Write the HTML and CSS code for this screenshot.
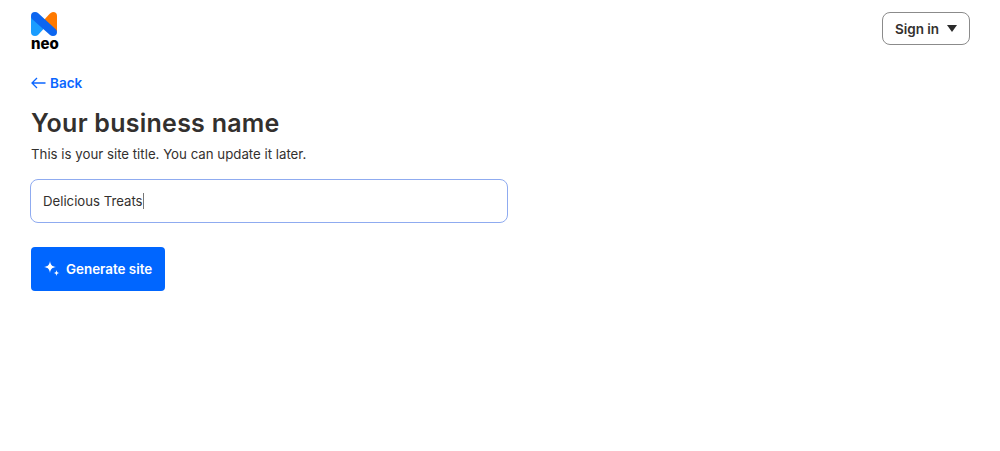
FILE: index.html
```html
<!DOCTYPE html>
<html lang="en">
<head>
    <meta name="viewport" content="width=device-width, initial-scale=1.0">
    <title>Your business name</title>
    <link rel="stylesheet" href="styles.css">
</head>
<body>
    <header class="top-bar">
        <a class="logo" href="#">
            <svg class="logo-mark" viewBox="0 0 26 24" width="26" height="24">
                <path fill="#ff7a00" d="M17.500 3 19 1.500Q20.500 0 22 0 26 0 26 4V20L13 8Z"/>
                <path fill="#1a9dff" d="M0 4V20Q0 24 4 24 6 24 7 23L13 16.500 2 5Z"/>
                <path fill="#0c66f0" d="M0 4Q0 0 4 0 6 0 7 1L25 17.500Q26 18.500 26 20 26 24 22 24 20 24 19 23L1 7Q0 6 0 4Z"/>
            </svg>
            <span class="logo-text">neo</span>
        </a>
        <button class="signin-btn">Sign in <span class="caret"></span></button>
    </header>

    <main class="container">
        <a class="back-link" href="#">
            <svg viewBox="0 0 15 12" width="15" height="12">
                <path d="M14.500 6H1M6 1 1 6l5 5" fill="none" stroke="#0b66ff" stroke-width="1.300"/>
            </svg>
            Back
        </a>
        <h1>Your business name</h1>
        <p class="subtitle">This is your site title. You can update it later.</p>

        <div class="input-box">
            <span class="input-text">Delicious Treats</span><span class="cursor"></span>
        </div>

        <button class="btn">
            <svg viewBox="0 0 16 16" width="16" height="16">
                <path fill="#fff" d="M6 0c.6 4 2 5.400 6 6-4 .6-5.400 2-6 6-.6-4-2-5.400-6-6 4-.6 5.400-2 6-6z"/>
                <path fill="#fff" d="M12.500 9c.3 2 1 2.700 3 3-2 .3-2.700 1-3 3-.3-2-1-2.700-3-3 2-.3 2.700-1 3-3z"/>
            </svg>
            Generate site
        </button>
    </main>
</body>
</html>
```

FILE: styles.css
```css
* {
    margin: 0;
    padding: 0;
    box-sizing: border-box;
    font-family: Inter, "Liberation Sans", sans-serif;
}

body {
    min-height: 100vh;
    background-color: #fff;
    color: #33302e;
}

.top-bar {
    display: flex;
    justify-content: space-between;
    align-items: flex-start;
    padding: 12px 30px 0 31px;
}

.logo {
    display: flex;
    flex-direction: column;
    width: 28px;
    text-decoration: none;
    color: #000;
}

.logo-mark {
    display: block;
}

.logo-text {
    font-size: 15px;
    font-weight: 800;
    line-height: 15px;
}

.signin-btn {
    display: flex;
    align-items: center;
    justify-content: center;
    gap: 8px;
    width: 88px;
    height: 33px;
    font-size: 13.500px;
    font-weight: 600;
    color: #33302e;
    background: #fff;
    border: 1px solid #8b8b8b;
    border-radius: 8px;
    cursor: pointer;
}

.caret {
    width: 0;
    height: 0;
    border-left: 5.500px solid transparent;
    border-right: 5.500px solid transparent;
    border-top: 7px solid #2b2b2b;
}

.container {
    display: flex;
    flex-direction: column;
    align-items: flex-start;
    padding: 24px 0 0 30px;
}

.back-link {
    display: flex;
    align-items: center;
    gap: 4px;
    margin-left: 1px;
    font-size: 13.500px;
    font-weight: 600;
    line-height: 16px;
    color: #0b66ff;
    text-decoration: none;
}

h1 {
    margin-top: 16px;
    margin-left: 1px;
    font-size: 25px;
    font-weight: 600;
    letter-spacing: 0.25px;
    line-height: 32px;
    color: #33302e;
}

.subtitle {
    margin-top: 5px;
    margin-left: 1px;
    font-size: 13.250px;
    line-height: 20px;
}

.input-box {
    display: flex;
    align-items: center;
    width: 478px;
    height: 44px;
    margin-top: 15px;
    padding-left: 12px;
    font-size: 13.200px;
    border: 1px solid #8fabf0;
    border-radius: 8px;
}

.cursor {
    width: 1px;
    height: 16px;
    background: #777;
}

.btn {
    display: flex;
    align-items: center;
    gap: 6px;
    width: 134px;
    height: 44px;
    margin-top: 24px;
    margin-left: 1px;
    padding-left: 13px;
    font-size: 13.400px;
    font-weight: 600;
    color: #fff;
    background: #0066ff;
    border: none;
    border-radius: 4px;
    cursor: pointer;
}
```
